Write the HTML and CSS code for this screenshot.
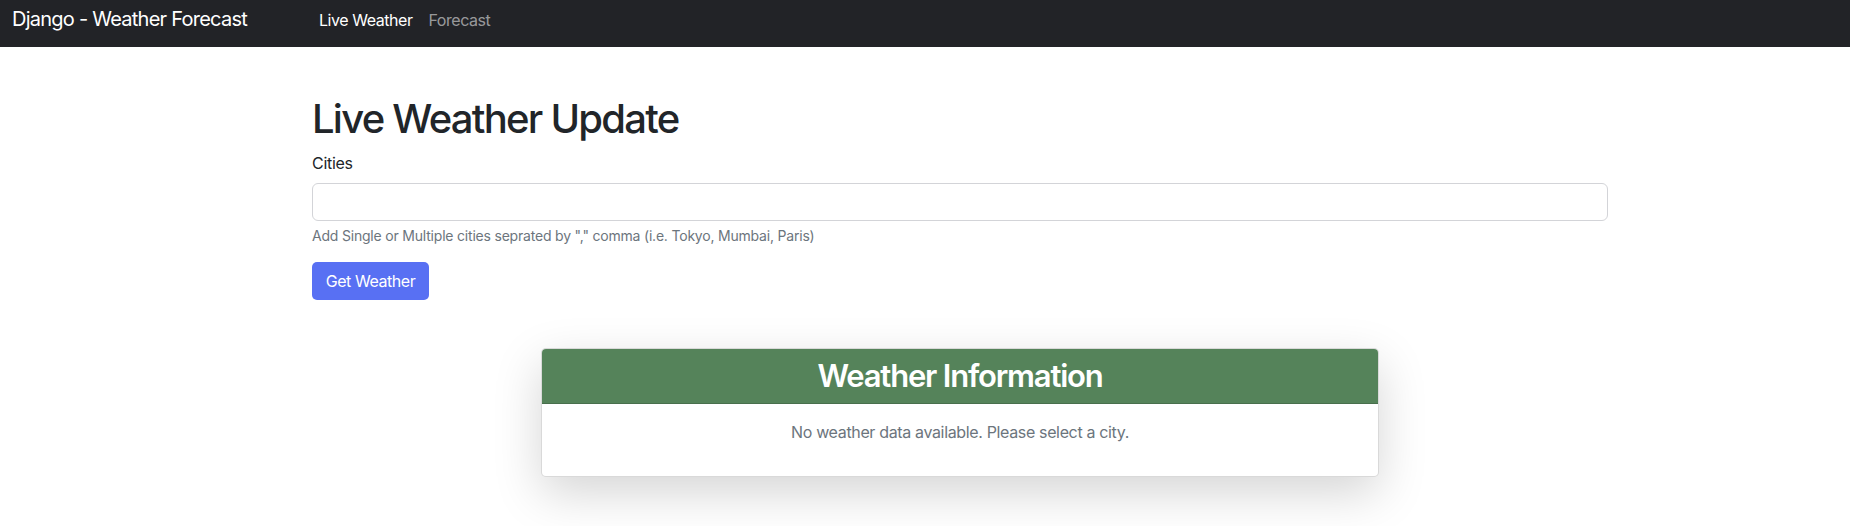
FILE: index.html
```html
<!DOCTYPE html>
<html lang="en">
<head>
<meta charset="utf-8">
<title>Django - Weather Forecast</title>
<link rel="stylesheet" href="styles.css">
</head>
<body>
<nav class="navbar">
  <a class="brand" href="#">Django - Weather Forecast</a>
  <ul class="nav">
    <li><a class="nav-link active" href="#">Live Weather</a></li>
    <li><a class="nav-link" href="#">Forecast</a></li>
  </ul>
</nav>
<main class="container">
  <h1 class="title">Live Weather Update</h1>
  <form class="form">
    <div class="field">
      <label class="label" for="cities">Cities</label>
      <input class="input" id="cities" type="text">
      <div class="help">Add Single or Multiple cities seprated by "," comma (i.e. Tokyo, Mumbai, Paris)</div>
    </div>
    <button class="btn" type="button">Get Weather</button>
  </form>
  <section class="card">
    <header class="card-header"><h2 class="card-title">Weather Information</h2></header>
    <div class="card-body"><p class="muted">No weather data available. Please select a city.</p></div>
  </section>
</main>
</body>
</html>
```

FILE: styles.css
```css
* { box-sizing: border-box; }
html, body { margin: 0; padding: 0; }
body {
  font-family: Inter, "Noto Sans", "Liberation Sans", sans-serif;
  font-size: 16px;
  line-height: 1.5;
  color: #212529;
  background: #fff;
  min-height: 526px;
}
.navbar {
  height: 47px;
  background: #222327;
  display: grid;
  grid-template-columns: 299px auto;
  align-items: baseline;
  padding: 4px 12px 0;
}
.brand {
  color: #fff;
  text-decoration: none;
  font-size: 20px;
  line-height: 30px;
  letter-spacing: -0.75px;
}
.nav {
  list-style: none;
  margin: 0;
  padding: 0;
  display: flex;
}
.nav-link {
  display: block;
  padding: 0 8px;
  color: rgba(255,255,255,.55);
  text-decoration: none;
  font-size: 16px;
  line-height: 24px;
  letter-spacing: -0.45px;
}
.nav-link.active { color: #fff; }
.container {
  width: 1296px;
  margin: 0 0 0 312px;
  padding: 48px 0 60px;
}
.title {
  margin: 0 0 8px;
  font-size: 40px;
  font-weight: 500;
  line-height: 1.2;
  letter-spacing: -1.75px;
}
.field { margin-bottom: 16px; }
.label {
  display: block;
  margin-bottom: 8px;
  letter-spacing: -0.3px;
}
.input {
  display: block;
  width: 100%;
  height: 38px;
  border: 1px solid #d3d4d8;
  border-radius: 6px;
  padding: 6px 12px;
  font: inherit;
}
.help {
  margin-top: 4px;
  font-size: 14px;
  color: #6c757d;
  letter-spacing: -0.2px;
}
.btn {
  display: block;
  height: 38px;
  width: 117px;
  padding: 0;
  border: none;
  border-radius: 5px;
  background: #5870f3;
  color: #fff;
  font: inherit;
  letter-spacing: -0.45px;
  white-space: nowrap;
  text-align: center;
}
.card {
  width: 838px;
  margin: 48px auto 0;
  border: 1px solid rgba(0,0,0,.15);
  border-radius: 5px;
  box-shadow: 0 16px 48px rgba(0,0,0,.17);
  overflow: hidden;
  background: #fff;
}
.card-header {
  background: #55835a;
  border-bottom: 1px solid rgba(0,0,0,.15);
  padding: 8px 16px;
  text-align: center;
}
.card-title {
  margin: 0;
  color: #fff;
  font-size: 31px;
  font-weight: 600;
  line-height: 38px;
  letter-spacing: -1.2px;
}
.card-body {
  padding: 16px;
  text-align: center;
}
.muted {
  margin: 0 0 16px;
  color: #6c757d;
  letter-spacing: -0.35px;
}
```
